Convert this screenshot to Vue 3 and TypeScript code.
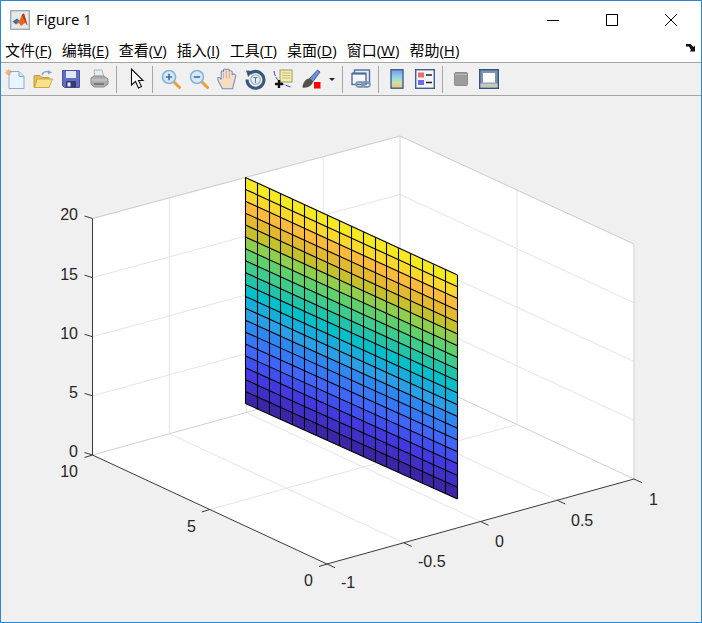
<script setup lang="ts">
interface Pt {
  x: number
  y: number
}
interface Seg {
  a: Pt
  b: Pt
}
interface Label {
  text: string
  x: number
  y: number
  anchor: string
}

const menus = [
  { name: '文件', key: 'F' },
  { name: '编辑', key: 'E' },
  { name: '查看', key: 'V' },
  { name: '插入', key: 'I' },
  { name: '工具', key: 'T' },
  { name: '桌面', key: 'D' },
  { name: '窗口', key: 'W' },
  { name: '帮助', key: 'H' },
]

// axes box corners, read off the picture
const front = { x: 327, y: 564 }
const left = { x: 92.5, y: 455 }
const right = { x: 634, y: 479 }
const back = { x: 400, y: 370 }
const leftTop = { x: 92.5, y: 218.5 }
const backTop = { x: 400, y: 136 }
const rightTop = { x: 634, y: 244 }

const mix = (a: Pt, b: Pt, t: number): Pt => ({
  x: a.x + (b.x - a.x) * t,
  y: a.y + (b.y - a.y) * t,
})

const gridLines: Seg[] = []
for (let i = 1; i <= 4; i++) {
  const t = i / 4
  gridLines.push({ a: mix(left, leftTop, t), b: mix(back, backTop, t) })
  gridLines.push({ a: mix(back, backTop, t), b: mix(right, rightTop, t) })
}
for (const t of [0.25, 0.5, 0.75]) {
  const onBack = mix(left, back, t)
  gridLines.push({ a: mix(front, right, t), b: onBack })
  gridLines.push({ a: onBack, b: mix(leftTop, backTop, t) })
}
const yMid = mix(front, left, 0.5)
const yBack = mix(right, back, 0.5)
gridLines.push({ a: yMid, b: yBack })
gridLines.push({ a: yBack, b: mix(rightTop, backTop, 0.5) })

const boxLines: Seg[] = [
  { a: left, b: back },
  { a: back, b: right },
  { a: back, b: backTop },
  { a: leftTop, b: backTop },
  { a: backTop, b: rightTop },
  { a: right, b: rightTop },
]

const axisLines: Seg[] = [
  { a: left, b: leftTop },
  { a: left, b: front },
  { a: front, b: right },
]
for (let i = 0; i <= 4; i++) {
  const p = mix(left, leftTop, i / 4)
  axisLines.push({ a: p, b: { x: p.x - 8, y: p.y - 2.5 } })
}
for (const t of [0, 0.5, 1]) {
  const p = mix(front, left, t)
  axisLines.push({ a: p, b: { x: p.x - 8, y: p.y + 2.5 } })
}
for (let i = 0; i <= 4; i++) {
  const p = mix(front, right, i / 4)
  axisLines.push({ a: p, b: { x: p.x + 8, y: p.y + 3.7 } })
}

const labels: Label[] = [
  { text: '20', x: 78, y: 220, anchor: 'end' },
  { text: '15', x: 78, y: 280, anchor: 'end' },
  { text: '10', x: 78, y: 339, anchor: 'end' },
  { text: '5', x: 78, y: 398, anchor: 'end' },
  { text: '0', x: 78, y: 457, anchor: 'end' },
  { text: '10', x: 78, y: 477, anchor: 'end' },
  { text: '5', x: 196, y: 532, anchor: 'end' },
  { text: '0', x: 313, y: 586, anchor: 'end' },
  { text: '-1', x: 341, y: 588, anchor: 'start' },
  { text: '-0.5', x: 418, y: 567, anchor: 'start' },
  { text: '0', x: 495, y: 547, anchor: 'start' },
  { text: '0.5', x: 571, y: 526, anchor: 'start' },
  { text: '1', x: 649, y: 505, anchor: 'start' },
]

// surface, 18 columns by 19 rows, top row first
const rowColors = [
  '#f5e922', '#fbd92c', '#feba3a', '#e4b82f', '#c4c12d', '#90ce4e', '#5fd06c',
  '#3ecc8e', '#22c4a9', '#05bfc9', '#17aedb', '#2a9fe6', '#2f88ef', '#3778f8',
  '#4066fb', '#3f50ee', '#4439e0', '#4030c8', '#3d25a8',
]
const cols = 18
const rows = rowColors.length
const tl = { x: 245.5, y: 177.5 }
const tr = { x: 457.5, y: 275 }
const bl = { x: 245.5, y: 403.5 }
const br = { x: 457.5, y: 499 }

const corner = (c: number, r: number): Pt =>
  mix(mix(tl, tr, c / cols), mix(bl, br, c / cols), r / rows)

const cells: { points: string; color: string }[] = []
for (let r = 0; r < rows; r++) {
  const quad = [corner(0, r), corner(cols, r), corner(cols, r + 1), corner(0, r + 1)]
  cells.push({
    points: quad.map((p) => `${p.x},${p.y}`).join(' '),
    color: rowColors[r],
  })
}

const meshLines: Seg[] = []
for (let r = 0; r <= rows; r++) {
  meshLines.push({ a: corner(0, r), b: corner(cols, r) })
}
for (let c = 0; c <= cols; c++) {
  // verticals sit on the pixel grid, as in the original
  const a = corner(c, 0)
  const b = corner(c, rows)
  const x = Math.floor(a.x) + 0.5
  meshLines.push({ a: { x, y: a.y }, b: { x, y: b.y } })
}
</script>

<template>
  <div class="window">
    <div class="titlebar">
      <svg class="app-icon" width="20" height="20" viewBox="0 0 20 20">
        <rect x="0.7" y="0.7" width="18.6" height="18.6" fill="#e6e9ec" stroke="#a2a8ae" stroke-width="1.4" />
        <path d="M2.500 11.500L7 8.500L9.500 10.500L6 14.500Z" fill="#3f6f9f" />
        <path d="M6 14.500L9.500 10.500L12 4.500L14 3.500L17.500 15.500L15 13L11 16L9 13Z" fill="#e8641f" />
        <path d="M12 4.500L14 3.500L17.500 15.500L14 9.500Z" fill="#b5341a" />
      </svg>
      <span class="title">Figure 1</span>
      <div class="win-buttons">
        <svg width="12" height="12" viewBox="0 0 12 12" class="win-min"><path d="M0 6.500H12" stroke="#000" /></svg>
        <svg width="12" height="12" viewBox="0 0 12 12" class="win-max"><rect x="0.500" y="0.500" width="11" height="11" fill="none" stroke="#000" /></svg>
        <svg width="12" height="12" viewBox="0 0 12 12" class="win-close"><path d="M0 0L12 12M12 0L0 12" stroke="#000" /></svg>
      </div>
    </div>

    <div class="menubar">
      <span v-for="m in menus" :key="m.key" class="menu-item">{{ m.name }}(<u>{{ m.key }}</u>)</span>
      <svg class="dock" width="10" height="8" viewBox="0 0 10 8">
        <path d="M0 0H4.500L7.500 3L9 1.500V7.500H3.500L5 6L3 2.500H0Z" fill="#111" />
      </svg>
    </div>

    <div class="toolbar">
      <div class="btn">
        <svg width="20" height="20" viewBox="0 0 20 20">
          <path d="M4 2.500H14L19 7.500V19.500H4Z" fill="#eaf4fc" stroke="#86add3" />
          <path d="M14 2.500V7.500H19" fill="#cfe2f3" stroke="#86add3" />
          <circle cx="3.500" cy="3.500" r="2.200" fill="#ef8a4b" />
          <path d="M3.500 0V7M0 3.500H7M1 1L6 6M6 1L1 6" stroke="#f3b48c" stroke-width="0.8" />
        </svg>
      </div>
      <div class="btn">
        <svg width="20" height="20" viewBox="0 0 20 20">
          <path d="M1 6.500H7L9 8.500H16V18.500H1Z" fill="#e2bd58" stroke="#c39c3c" />
          <path d="M1.500 18.500L4 10H19.500L16 18.500Z" fill="#fbe08a" stroke="#cda543" />
          <path d="M9 6C10 3 13 2 16 3" fill="none" stroke="#8fa7bf" stroke-width="1.600" />
          <path d="M15 1L19 3.500L15 5.500Z" fill="#8fa7bf" />
        </svg>
      </div>
      <div class="btn">
        <svg width="20" height="20" viewBox="0 0 20 20">
          <path d="M1.500 1.500H18.500V18.500H3.500L1.500 16.500Z" fill="#606dc2" stroke="#4753a5" />
          <rect x="5" y="2" width="10" height="7" fill="#e3e6f5" />
          <rect x="5" y="12" width="10" height="6.500" fill="#353b72" />
          <rect x="6.500" y="13.500" width="3" height="4" fill="#e8ebf5" />
        </svg>
      </div>
      <div class="btn">
        <svg width="20" height="20" viewBox="0 0 20 20">
          <path d="M5 1H13L15 8H6Z" fill="#e3ecf1" stroke="#aeb8be" />
          <path d="M2 9L5 7H15L19 10V15L15 18H5L2 15Z" fill="#adadad" stroke="#8d8d8d" />
          <path d="M3 11H18" stroke="#d6d6d6" />
          <path d="M5 15H15" stroke="#7a7a7a" stroke-width="2" />
        </svg>
      </div>
      <i class="sep"></i>
      <div class="btn btn-pointer">
        <svg width="20" height="22" viewBox="0 0 20 22">
          <path d="M4.500 1V17L8.500 13.500L11.500 20L14.500 18.500L11.500 12.500H16Z" fill="#fff" stroke="#111" stroke-width="1.100" />
        </svg>
      </div>
      <i class="sep sep-tight"></i>
      <div class="btn">
        <svg width="20" height="20" viewBox="0 0 20 20">
          <path d="M12.500 12.500L18.500 18.500" stroke="#e9a23b" stroke-width="3" stroke-linecap="round" />
          <circle cx="8" cy="8" r="6.500" fill="#d5e8f7" stroke="#8bb1d3" stroke-width="1.600" />
          <path d="M4.800 8H11.200M8 4.800V11.200" stroke="#3e6f9e" stroke-width="1.600" />
        </svg>
      </div>
      <div class="btn">
        <svg width="20" height="20" viewBox="0 0 20 20">
          <path d="M12.500 12.500L18.500 18.500" stroke="#e9a23b" stroke-width="3" stroke-linecap="round" />
          <circle cx="8" cy="8" r="6.500" fill="#d5e8f7" stroke="#8bb1d3" stroke-width="1.600" />
          <path d="M4.800 8H11.200" stroke="#3e6f9e" stroke-width="1.600" />
        </svg>
      </div>
      <div class="btn">
        <svg width="22" height="22" viewBox="0 1 18 19">
          <path
            d="M5 19C3 15 1 12 1 10C1 8.500 3 9 4 11V4.500C4 3 6 3 6 4.500V3C6 1.500 8.500 1.500 8.500 3C8.500 1.500 11 1.500 11 3V4C11 3 13.500 3 13.500 4.500V7C14 5.500 17 6 16.500 8L15 14C14.500 16 14 17.500 14 19Z"
            fill="#f9dcc4"
            stroke="#6b90c8"
            stroke-width="0.9"
          />
          <path d="M6 5V10M8.500 3.500V10M11 4V10" stroke="#c9a58c" stroke-width="0.7" />
        </svg>
      </div>
      <div class="btn">
        <svg width="21" height="21" viewBox="0 0 20 20">
          <path d="M4.500 4.500A8 8 0 1 1 2 10" fill="none" stroke="#36577f" stroke-width="3" />
          <path d="M1 1.500L7.500 2L3 7.500Z" fill="#36577f" />
          <circle cx="10" cy="10" r="4.500" fill="#e9eef4" stroke="#8fa3ba" />
          <path d="M8 8H12M10 8V13" stroke="#5b7594" />
        </svg>
      </div>
      <div class="btn">
        <svg width="20" height="20" viewBox="0 0 20 20">
          <path d="M1 2C2 9 6 15 18 18" fill="none" stroke="#3a3ee0" stroke-dasharray="5 1.500" />
          <rect x="7" y="1" width="12" height="12" fill="#f3ecaa" stroke="#9e9a5f" />
          <path d="M9 4H17M9 6.500H17M9 9H17" stroke="#c5c08a" />
          <path d="M6 11V19M2 15H10" stroke="#111" stroke-width="2.400" />
        </svg>
      </div>
      <div class="btn">
        <svg width="20" height="20" viewBox="0 0 20 20">
          <path d="M8.500 9.500L16.500 1L19 3L12 12.500Z" fill="#6f8fd0" stroke="#49659f" />
          <path d="M1.500 18.500C1.500 14 5 9 9 9.500L12 12.500C11.500 16.500 6 19.500 1.500 18.500Z" fill="#54504c" />
          <rect x="13" y="13" width="6.500" height="6.500" fill="#f00" />
        </svg>
      </div>
      <div class="caret"></div>
      <i class="sep"></i>
      <div class="btn">
        <svg width="20" height="20" viewBox="0 0 20 20">
          <rect x="3.500" y="1" width="15" height="13" fill="#e7edf4" stroke="#4d6f9b" stroke-width="1.400" />
          <rect x="1" y="4.500" width="14" height="11" fill="#f3f6fa" stroke="#4d6f9b" stroke-width="1.400" />
          <path d="M1 4.500H15" stroke="#4d6f9b" stroke-width="2" />
          <ellipse cx="9" cy="15.500" rx="4" ry="2.500" fill="none" stroke="#7d95b3" stroke-width="1.800" />
          <ellipse cx="15" cy="15.500" rx="4" ry="2.500" fill="none" stroke="#7d95b3" stroke-width="1.800" />
        </svg>
      </div>
      <i class="sep"></i>
      <div class="btn">
        <svg width="20" height="20" viewBox="0 0 20 20">
          <defs>
            <linearGradient id="cbar" x1="0" y1="0" x2="0" y2="1">
              <stop offset="0" stop-color="#7f93e0" />
              <stop offset="0.4" stop-color="#8fd6e6" />
              <stop offset="0.7" stop-color="#c8e6a0" />
              <stop offset="1" stop-color="#f8b878" />
            </linearGradient>
          </defs>
          <rect x="4" y="0.700" width="12" height="18.500" fill="url(#cbar)" stroke="#3f5f8f" stroke-width="1.400" />
        </svg>
      </div>
      <div class="btn">
        <svg width="20" height="20" viewBox="0 0 20 20">
          <rect x="0.700" y="0.700" width="18.600" height="18.600" fill="#f4f6f9" stroke="#3f5f8f" stroke-width="1.400" />
          <rect x="3" y="3.500" width="6" height="5" fill="#ef6a6a" />
          <rect x="3" y="11" width="6" height="5" fill="#6a6aef" />
          <path d="M11 6H17M11 13.500H17" stroke="#222" stroke-width="1.400" />
        </svg>
      </div>
      <i class="sep"></i>
      <div class="btn">
        <svg width="20" height="20" viewBox="0 0 20 20">
          <rect x="3.500" y="3.500" width="13" height="13" rx="1" fill="#9c9c9c" stroke="#8c8c8c" />
          <path d="M4 5.500H16" stroke="#b8b8b8" />
        </svg>
      </div>
      <div class="btn">
        <svg width="20" height="20" viewBox="0 0 20 20">
          <rect x="0.700" y="0.700" width="18.600" height="18.600" fill="#7f93b0" stroke="#35527f" stroke-width="1.400" />
          <rect x="4" y="4" width="12" height="9.500" fill="#fdfdfd" />
          <rect x="1.400" y="14.500" width="17.200" height="4" fill="#c9c7b8" />
        </svg>
      </div>
    </div>

    <svg class="figure" viewBox="1 96 700 526" width="700" height="526">
      <polygon
        :points="`${left.x},${left.y} ${leftTop.x},${leftTop.y} ${backTop.x},${backTop.y} ${rightTop.x},${rightTop.y} ${right.x},${right.y} ${front.x},${front.y}`"
        fill="#fff"
      />
      <line
        v-for="(s, i) in gridLines"
        :key="'g' + i"
        :x1="s.a.x"
        :y1="s.a.y"
        :x2="s.b.x"
        :y2="s.b.y"
        stroke="#e4e4e4"
      />
      <line
        v-for="(s, i) in boxLines"
        :key="'b' + i"
        :x1="s.a.x"
        :y1="s.a.y"
        :x2="s.b.x"
        :y2="s.b.y"
        stroke="#d0d0d0"
      />
      <polygon v-for="(c, i) in cells" :key="'c' + i" :points="c.points" :fill="c.color" />
      <line
        v-for="(s, i) in meshLines"
        :key="'m' + i"
        :x1="s.a.x"
        :y1="s.a.y"
        :x2="s.b.x"
        :y2="s.b.y"
        stroke="#000"
        stroke-width="1.1"
      />
      <line
        v-for="(s, i) in axisLines"
        :key="'a' + i"
        :x1="s.a.x"
        :y1="s.a.y"
        :x2="s.b.x"
        :y2="s.b.y"
        stroke="#3a3a3a"
      />
      <text
        v-for="(l, i) in labels"
        :key="'t' + i"
        :x="l.x"
        :y="l.y"
        :text-anchor="l.anchor"
        class="tick"
      >{{ l.text }}</text>
    </svg>
  </div>
</template>

<style scoped>
.window {
  width: 702px;
  height: 623px;
  box-sizing: border-box;
  border: 1px solid #2b87d3;
  background: #f0f0f0;
  display: flex;
  flex-direction: column;
  overflow: hidden;
}
.titlebar {
  height: 35px;
  background: #fff;
  display: flex;
  align-items: center;
  padding-left: 9px;
  flex: none;
}
.app-icon {
  margin-top: 2px;
}
.title {
  margin-left: 6px;
  font: 15px "Open Sans", "Noto Sans", sans-serif;
  color: #000;
}
.win-buttons {
  margin-left: auto;
  display: flex;
  align-items: center;
  margin-top: 2px;
}
.win-min {
  margin-right: 47px;
}
.win-max {
  margin-right: 47px;
}
.win-close {
  margin-right: 24px;
}
.menubar {
  height: 26px;
  background: #fff;
  display: flex;
  align-items: center;
  gap: 10px;
  padding-left: 4px;
  flex: none;
}
.menu-item {
  font: 15px "Open Sans", "Noto Sans CJK SC", sans-serif;
  color: #000;
  white-space: nowrap;
}
.dock {
  margin-left: auto;
  margin-right: 5px;
  margin-top: -3px;
}
.toolbar {
  height: 34px;
  box-sizing: border-box;
  border-top: 1px solid #a6a6a6;
  border-bottom: 1px solid #a6a6a6;
  background: #f0f0f0;
  display: flex;
  align-items: center;
  flex: none;
}
.btn {
  width: 28px;
  height: 24px;
  display: flex;
  align-items: center;
  justify-content: center;
  flex: none;
}
.btn-pointer {
  margin-left: 2px;
}
.sep {
  width: 1px;
  height: 27px;
  background: #a6a6a6;
  margin: 0 4px 0 3px;
  flex: none;
}
.sep-tight {
  margin-left: 1px;
}
.caret {
  width: 14px;
  display: flex;
  justify-content: center;
  flex: none;
}
.caret::before {
  content: "";
  border-left: 3px solid transparent;
  border-right: 3px solid transparent;
  border-top: 3px solid #222;
}
.figure {
  display: block;
  flex: none;
}
.tick {
  font: 16px "Liberation Sans", Arial, sans-serif;
  fill: #262626;
}
</style>

<style>
html,
body {
  margin: 0;
  padding: 0;
}
</style>
